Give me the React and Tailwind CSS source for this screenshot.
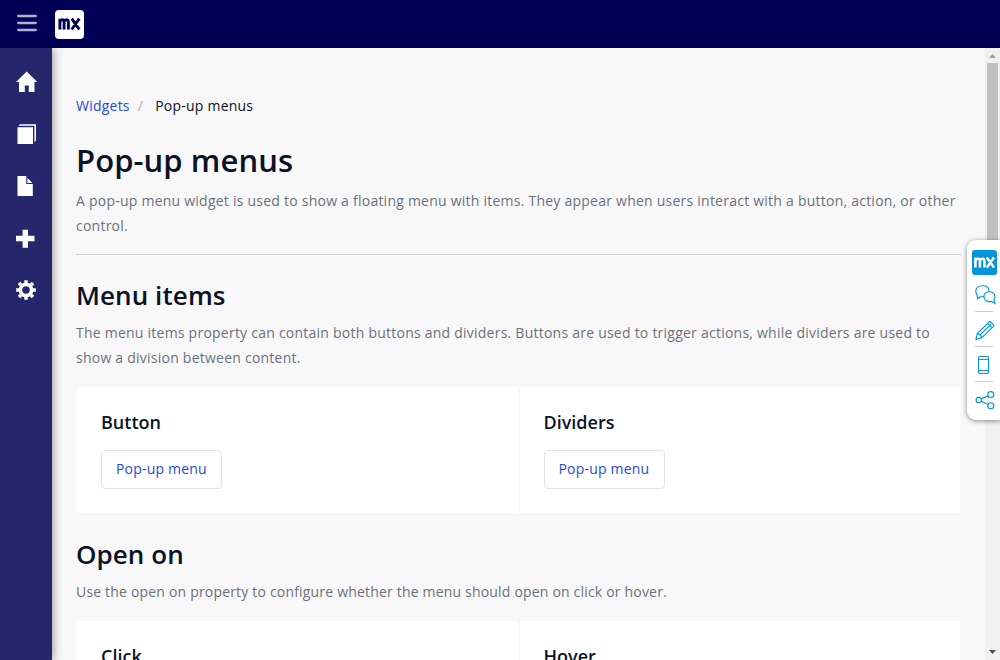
import React from "react";

const navIcons = [
  { name: "home", d: "M10.7 0.6 L21.4 11 H18.5 V21 H12.8 V14.4 H8.8 V21 H3 V11 H0 Z", top: "mt-[23px]" },
  { name: "duplicate", d: "M1.5 3.2 H17 V20 H1.5 Z M4 0.2 H20 V16.5 L18.4 18.3 V1.8 H2.4 Z", top: "mt-[32px]" },
  { name: "file", d: "M1.5 0 H10.3 V8 H16.8 V20 H1.5 Z M11.4 2 L16.4 7 H11.4 Z", top: "mt-[31px]" },
  { name: "plus", d: "M6.6 0.7 H12 V6.8 H18.5 V12.2 H12 V18.8 H6.6 V12.2 H0 V6.8 H6.6 Z", top: "mt-[32px]" },
];

function Sidebar() {
  return (
    <nav className="relative z-10 flex w-[52px] shrink-0 flex-col bg-[#24276c] pl-4 shadow-[2px_0_8px_rgba(0,0,0,0.35)]">
      {navIcons.map((i) => (
        <svg key={i.name} className={"h-[21px] w-[22px] shrink-0 " + i.top} viewBox="0 0 22 21" fill="#fff">
          <path d={i.d} />
        </svg>
      ))}
      <svg className="mt-[30px] h-[21px] w-[21px] shrink-0" viewBox="-10 -10 21 21" fill="none" stroke="#fff">
        <circle r="5.6" strokeWidth="3.6" />
        <g strokeWidth="3.4">
          <path d="M0 -7V-9.8M0 7V9.8M-7 0H-9.8M7 0H9.8M-5 -5L-7 -7M5 5L7 7M-5 5L-7 7M5 -5L7 -7" />
        </g>
      </svg>
    </nav>
  );
}

function Card({ title }) {
  return (
    <div className="flex-1 bg-white px-6 pt-[23px]">
      <h4 className="h-6 text-[18px] leading-6 font-semibold text-[#0a1325]">{title}</h4>
      <button className="mt-[16px] flex h-[39px] w-[121px] items-center rounded-[4px] border border-[#e4e4e7] pb-[2px] pl-[14px] text-[14px] tracking-[0.2px] whitespace-nowrap text-[#264ae5]">
        Pop-up menu
      </button>
    </div>
  );
}

function Cards({ titles }) {
  return (
    <div className="ml-px flex h-[126px] w-[883px] shrink-0 gap-[2px]">
      {titles.map((t) => <Card key={t} title={t} />)}
    </div>
  );
}

function Toolbox() {
  return (
    <aside className="absolute top-[240px] left-[967px] z-20 flex h-[180px] w-[40px] flex-col rounded-[9px] bg-white pt-[10px] pl-[5px] shadow-[0_1px_5px_rgba(0,0,0,0.45)]">
      <div className="flex h-[25px] w-[25px] items-center justify-center rounded-[3px] bg-[#0595db]">
        <svg className="h-[25px] w-[25px]" viewBox="0 0 25 25" fill="none" stroke="#fff" strokeWidth="2.5">
          <path d="M3.4 17.5V7.4M3.4 11Q4 8.7 6 8.7Q7.9 8.7 7.9 11V17.5M7.9 11Q8.5 8.7 10.5 8.7Q12.4 8.7 12.4 11V17.5M14.8 7.5L22 17.5M22 7.5L14.8 17.5" />
        </svg>
      </div>
      <svg className="h-[145px] w-[28px]" viewBox="0 0 28 145" fill="none" stroke="#0595db" strokeWidth="1.15">
        <path d="M5.2 20.2L5.5 23.8L8.7 21.7Q16.8 22.5 17 15.9C17 12 14 10.7 10.6 10.7C6.5 10.7 3.8 12.7 3.8 16Q3.8 18.7 5.2 20.2Z" />
        <path fill="#fff" d="M17.6 16.7C13.9 16.7 11.9 18.8 11.9 21.7C11.9 25.4 15 27.2 19.3 26.4L22.9 28.4L22 25.2C24.2 20.8 22.2 16.7 17.6 16.7Z" />
        <path d="M3 36.5H21M3 71.5H21M3 106.5H21" stroke="#ccc" strokeWidth="1" />
        <path d="M4 64.5L5.3 58.5L17.3 46.8Q18 46.2 18.8 47L21.6 49.8Q22.2 50.5 21.6 51.2L9.8 62.8ZM5.3 58.5Q8.7 59.2 9.8 62.8M7.5 60.5L19 49.1M15.8 48.4L20 52.6" />
        <rect x="6.5" y="81.5" width="10" height="17" rx="1.4" />
        <path d="M6.5 84.5H16.5M6.5 95.5H16.5" />
        <circle cx="6.8" cy="125" r="2.7" /><circle cx="18.8" cy="119.6" r="3" /><circle cx="18.8" cy="130.7" r="3" />
        <path d="M9.5 123.8L16 120.9M9.5 126.2L16 129.4" />
      </svg>
    </aside>
  );
}

function Scrollbar() {
  return (
    <div className="flex w-[15px] shrink-0 flex-col items-center bg-[#f1f1f1]">
      <svg className="h-[15px] w-[15px] shrink-0" viewBox="0 0 15 15" fill="#a3a3a3"><path d="M4 10L7.5 6L11 10Z" /></svg>
      <div className="h-[252px] w-[11px] bg-[#c1c1c1]" />
      <svg className="mt-auto h-[15px] w-[15px] shrink-0" viewBox="0 0 15 15" fill="#505050"><path d="M4 5L7.5 9L11 5Z" /></svg>
    </div>
  );
}

export default function App() {
  return (
    <div className="relative flex h-[660px] w-[1000px] flex-col overflow-hidden bg-[#f8f8f8] font-['Open_Sans',sans-serif] text-[14px] text-[#0a1325]">
      <header className="flex h-12 shrink-0 items-center bg-[#000054]">
        <svg className="mb-[2px] ml-[17px] h-[20px] w-[20px]" viewBox="0 0 20 20" stroke="#b0b0cf" strokeWidth="2.6" strokeLinecap="round">
          <path d="M1.4 3H18.6M1.4 10H18.6M1.4 17H18.6" />
        </svg>
        <svg className="ml-[18px] h-[29px] w-[29px]" viewBox="0 0 29 29">
          <rect width="29" height="29" rx="4" fill="#fff" />
          <path d="M4.9 19.5V8.7M4.9 11.5Q5.5 9.7 7.2 9.7Q9.1 9.7 9.1 12V19.5M9.1 11.5Q9.7 9.7 11.4 9.7Q13.4 9.7 13.4 12V19.5M16.7 8.7L24.3 19.5M24.3 8.7L16.7 19.5" fill="none" stroke="#000054" strokeWidth="2.9" />
        </svg>
      </header>
      <div className="flex min-h-0 flex-1">
        <Sidebar />
        <main className="flex min-w-0 flex-1 flex-col overflow-hidden pt-[45px] pl-6">
          <div className="flex h-6 shrink-0 items-center tracking-[0.23px]">
            <a className="text-[#264ae5]">Widgets</a>
            <span className="ml-2 text-[#a9acb3]">/</span>
            <span className="ml-3">Pop-up menus</span>
          </div>
          <h1 className="mt-[23px] h-10 shrink-0 text-[31px] leading-10 font-semibold tracking-[0.08px]">Pop-up menus</h1>
          <p className="mt-[8px] w-[885px] shrink-0 leading-[25px] tracking-[0.236px] text-[#6c717e]">
            A pop-up menu widget is used to show a floating menu with items. They appear when users interact with a button, action, or other control.
          </p>
          <hr className="mt-4 w-[885px] shrink-0 border-[#ced0d3]" />
          <h2 className="mt-[22px] h-9 shrink-0 text-[26px] leading-9 font-semibold tracking-[0.08px]">Menu items</h2>
          <p className="mt-[7px] w-[885px] shrink-0 leading-[25px] tracking-[0.236px] text-[#6c717e]">
            The menu items property can contain both buttons and dividers. Buttons are used to trigger actions, while dividers are used to show a division between content.
          </p>
          <div className="h-[17px] shrink-0" />
          <Cards titles={["Button", "Dividers"]} />
          <h2 className="mt-[23px] h-9 shrink-0 text-[26px] leading-9 font-semibold tracking-[0.08px]">Open on</h2>
          <p className="mt-[7px] shrink-0 leading-[25px] tracking-[0.186px] text-[#6c717e]">
            Use the open on property to configure whether the menu should open on click or hover.
          </p>
          <div className="h-[17px] shrink-0" />
          <Cards titles={["Click", "Hover"]} />
        </main>
        <Scrollbar />
      </div>
      <Toolbox />
    </div>
  );
}
